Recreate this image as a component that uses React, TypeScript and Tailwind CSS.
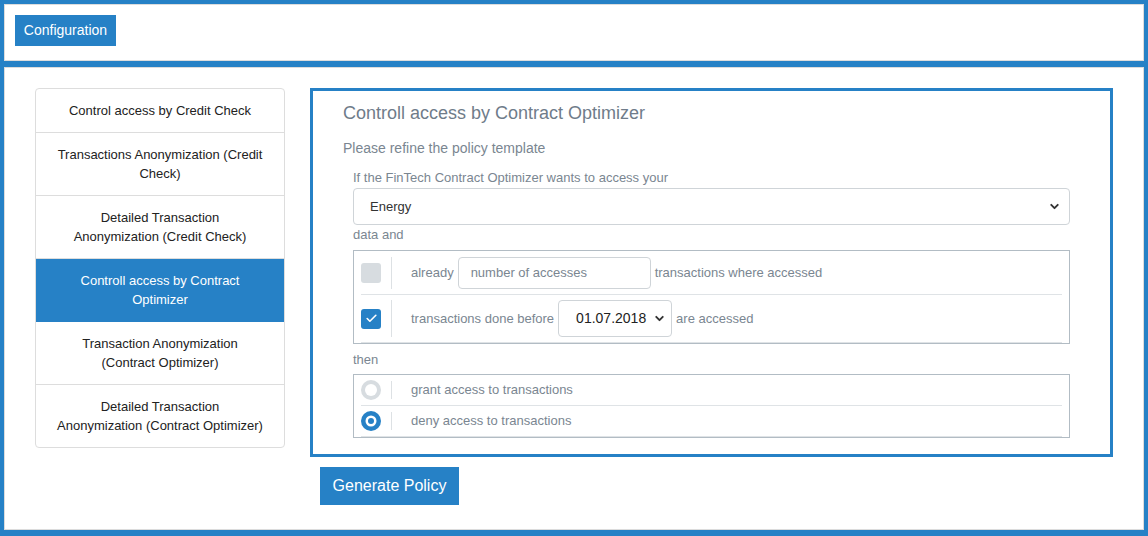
import React from 'react';
import { ChevronDown, Check } from 'lucide-react';

const policies = [
  'Control access by Credit Check',
  'Transactions Anonymization (Credit\nCheck)',
  'Detailed Transaction\nAnonymization (Credit Check)',
  'Controll access by Contract\nOptimizer',
  'Transaction Anonymization\n(Contract Optimizer)',
  'Detailed Transaction\nAnonymization (Contract Optimizer)',
];

const Divider: React.FC<{ h: string }> = ({ h }) => (
  <div className={`w-px ${h} bg-[#dde1e4] ml-[10px] mr-[19px]`} />
);

const Radio: React.FC<{ checked?: boolean }> = ({ checked }) => (
  <svg width="20" height="20" viewBox="0 0 20 20" className="shrink-0">
    {checked ? (
      <>
        <circle cx="10" cy="10" r="10" fill="#2681c6" />
        <circle cx="10" cy="10" r="5.5" fill="#fff" />
        <circle cx="10" cy="10" r="3" fill="#2681c6" />
      </>
    ) : (
      <>
        <circle cx="10" cy="10" r="10" fill="#d7dce0" />
        <circle cx="10" cy="10" r="6" fill="#fff" />
      </>
    )}
  </svg>
);

export default function App() {
  const active = 3;

  return (
    <div
      className="h-[536px] w-[1148px] bg-[#2681c6] pt-[4px] px-[4px] pb-[6px] flex flex-col gap-[6px]"
      style={{ fontFamily: '"Liberation Sans", Arial, sans-serif' }}
    >
      {/* top bar */}
      <div className="h-[57px] bg-white border border-[#dcdcdc] p-[10px]">
        <button className="h-[31px] w-[101px] bg-[#2681c6] text-white text-[14px]">Configuration</button>
      </div>

      {/* main */}
      <div className="flex-1 bg-white border border-[#dcdcdc] pt-[20px] px-[30px] flex gap-[25px]">
        <div className="w-[250px] self-start border border-[#dddddd] rounded-[4px] overflow-hidden">
          {policies.map((p, i) => (
            <div
              key={p}
              className={`px-4 py-3 text-center text-[13px] leading-[19px] whitespace-pre-line ${
                i < policies.length - 1 ? 'border-b' : ''
              } ${i === active ? 'bg-[#2681c6] text-white border-[#2681c6]' : 'text-[#222] border-[#dddddd]'}`}
            >
              {p}
            </div>
          ))}
        </div>

        <div className="flex flex-col">
          <div className="w-[803px] border-[3px] border-[#2681c6] px-[30px] pt-[10px] pb-[16px]">
            <h2 className="text-[18px] leading-[24px] text-[#6f7c8a]">Controll access by Contract Optimizer</h2>
            <p className="mt-[13px] text-[14px] leading-[20px] text-[#7a8691]">Please refine the policy template</p>

            <div className="mx-[10px] mt-[11px] text-[13px] text-[#7a8691]">
              <div className="leading-[18px]">If the FinTech Contract Optimizer wants to access your</div>
              <div className="mt-px h-[37px] border border-[#cfd4d8] rounded-[4px] flex items-center justify-between pl-[16px] pr-[8px] text-[#333]">
                <span className="pt-px">Energy</span>
                <ChevronDown size={13} strokeWidth={3.5} className="text-[#333]" />
              </div>
              <div className="leading-[18px] mt-px">data and</div>

              <div className="mt-[6px] border border-[#b2bcc4]">
                <div className="mx-[7px] h-[44px] border-b border-[#dfe3e6] flex items-center">
                  <div className="w-[20px] h-[20px] rounded-[3px] bg-[#d7dce0] shrink-0" />
                  <Divider h="h-[32px]" />
                  <span>already</span>
                  <div className="ml-[4px] mr-[4px] w-[193px] h-[32px] border border-[#cfd4d8] rounded-[4px] flex items-center pl-[12px] text-[#7a8691]">
                    number of accesses
                  </div>
                  <span>transactions where accessed</span>
                </div>
                <div className="mx-[7px] h-[48px] border-b border-[#dfe3e6] flex items-center">
                  <div className="w-[20px] h-[20px] rounded-[3px] bg-[#2681c6] shrink-0 flex items-center justify-center">
                    <Check size={13} strokeWidth={3} className="text-white" />
                  </div>
                  <Divider h="h-[37px]" />
                  <span>transactions done before</span>
                  <div className="ml-[4px] mr-[4px] w-[114px] h-[37px] border border-[#cfd4d8] rounded-[4px] flex items-center justify-between pl-[17px] pr-[5px] text-[14px] text-[#222]">
                    <span>01.07.2018</span>
                    <ChevronDown size={13} strokeWidth={3.5} className="text-[#333]" />
                  </div>
                  <span>are accessed</span>
                </div>
              </div>

              <div className="leading-[18px] mt-[7px]">then</div>

              <div className="mt-[5px] border border-[#b2bcc4]">
                <div className="mx-[7px] h-[31px] border-b border-[#dfe3e6] flex items-center">
                  <Radio />
                  <Divider h="h-[18px]" />
                  <span>grant access to transactions</span>
                </div>
                <div className="mx-[7px] h-[31px] border-b border-[#dfe3e6] flex items-center">
                  <Radio checked />
                  <Divider h="h-[18px]" />
                  <span>deny access to transactions</span>
                </div>
              </div>
            </div>
          </div>

          <button className="mt-[10px] ml-[10px] self-start w-[139px] h-[38px] bg-[#2681c6] text-white text-[16px]">
            Generate Policy
          </button>
        </div>
      </div>
    </div>
  );
}
